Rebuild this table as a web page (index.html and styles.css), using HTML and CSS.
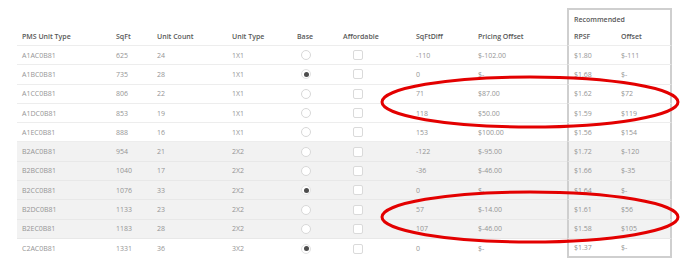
FILE: index.html
```html
<!DOCTYPE html>
<html>
<head>
<meta charset="utf-8">
<link rel="stylesheet" href="styles.css">
</head>
<body>
<div class="wrap">
<table class="grid">
  <colgroup>
    <col class="c1"><col class="c2"><col class="c3"><col class="c4"><col class="c5"><col class="c6"><col class="c7"><col class="c8"><col class="c9"><col class="c10">
  </colgroup>
  <thead>
    <tr class="group">
      <th colspan="8" class="blank"></th>
      <th colspan="2" class="rec-top">Recommended</th>
    </tr>
    <tr class="head">
      <th>PMS Unit Type</th><th>SqFt</th><th>Unit Count</th><th>Unit Type</th><th>Base</th><th>Affordable</th><th>SqFtDiff</th><th>Pricing Offset</th><th class="rl">RPSF</th><th class="rr">Offset</th>
    </tr>
  </thead>
  <tbody>
    <tr><td>A1AC0B81</td><td>625</td><td>24</td><td>1X1</td><td><span class="radio"></span></td><td><span class="check"></span></td><td>-110</td><td>$-102.00</td><td class="rl">$1.80</td><td class="rr">$-111</td></tr>
    <tr><td>A1BC0B81</td><td>735</td><td>28</td><td>1X1</td><td><span class="radio on"></span></td><td><span class="check"></span></td><td>0</td><td>$-</td><td class="rl">$1.68</td><td class="rr">$-</td></tr>
    <tr><td>A1CC0B81</td><td>806</td><td>22</td><td>1X1</td><td><span class="radio"></span></td><td><span class="check"></span></td><td>71</td><td>$87.00</td><td class="rl">$1.62</td><td class="rr">$72</td></tr>
    <tr><td>A1DC0B81</td><td>853</td><td>19</td><td>1X1</td><td><span class="radio"></span></td><td><span class="check"></span></td><td>118</td><td>$50.00</td><td class="rl">$1.59</td><td class="rr">$119</td></tr>
    <tr><td>A1EC0B81</td><td>888</td><td>16</td><td>1X1</td><td><span class="radio"></span></td><td><span class="check"></span></td><td>153</td><td>$100.00</td><td class="rl">$1.56</td><td class="rr">$154</td></tr>
    <tr class="alt"><td>B2AC0B81</td><td>954</td><td>21</td><td>2X2</td><td><span class="radio"></span></td><td><span class="check"></span></td><td>-122</td><td>$-95.00</td><td class="rl">$1.72</td><td class="rr">$-120</td></tr>
    <tr class="alt"><td>B2BC0B81</td><td>1040</td><td>17</td><td>2X2</td><td><span class="radio"></span></td><td><span class="check"></span></td><td>-36</td><td>$-46.00</td><td class="rl">$1.66</td><td class="rr">$-35</td></tr>
    <tr class="alt"><td>B2CC0B81</td><td>1076</td><td>33</td><td>2X2</td><td><span class="radio on"></span></td><td><span class="check"></span></td><td>0</td><td>$-</td><td class="rl">$1.64</td><td class="rr">$-</td></tr>
    <tr class="alt"><td>B2DC0B81</td><td>1133</td><td>23</td><td>2X2</td><td><span class="radio"></span></td><td><span class="check"></span></td><td>57</td><td>$-14.00</td><td class="rl">$1.61</td><td class="rr">$56</td></tr>
    <tr class="alt"><td>B2EC0B81</td><td>1183</td><td>28</td><td>2X2</td><td><span class="radio"></span></td><td><span class="check"></span></td><td>107</td><td>$-46.00</td><td class="rl">$1.58</td><td class="rr">$105</td></tr>
    <tr class="last"><td>C2AC0B81</td><td>1331</td><td>36</td><td>3X2</td><td><span class="radio on"></span></td><td><span class="check"></span></td><td>0</td><td>$-</td><td class="rl">$1.37</td><td class="rr">$-</td></tr>
  </tbody>
</table>
<svg class="marks" width="694" height="266" viewBox="0 0 694 266">
  <ellipse cx="530" cy="102" rx="148" ry="25" fill="none" stroke="#e30000" stroke-width="3"/>
  <ellipse cx="530" cy="217" rx="148" ry="25" fill="none" stroke="#e30000" stroke-width="3"/>
</svg>
</div>
</body>
</html>
```

FILE: styles.css
```css
html, body {
  margin: 0;
  padding: 0;
  background: #fff;
}
.wrap {
  position: relative;
  width: 694px;
  height: 266px;
  padding: 8px 0 0 17px;
  box-sizing: border-box;
  font-family: "Open Sans", "Liberation Sans", sans-serif;
  font-size: 7px;
}
.grid {
  border-collapse: separate;
  border-spacing: 0;
  table-layout: fixed;
  width: 655px;
}
.c1 { width: 94px; }
.c2 { width: 41px; }
.c3 { width: 75px; }
.c4 { width: 65px; }
.c5 { width: 46px; }
.c6 { width: 73px; }
.c7 { width: 62px; }
.c8 { width: 94px; }
.c9 { width: 49px; }
.c10 { width: 56px; }
th, td {
  padding: 0 0 0 5px;
  text-align: left;
  white-space: nowrap;
  box-sizing: border-box;
  vertical-align: middle;
}
th {
  font-weight: 600;
  color: #585858;
}
.group th {
  height: 20px;
}
.rec-top {
  border-top: 2px solid #cfcfcf;
  border-left: 2px solid #cfcfcf;
  border-right: 2px solid #cfcfcf;
  padding-left: 5px;
}
.head th {
  height: 18px;
  border-bottom: 1px solid #ededed;
}
td {
  height: 19.3px;
  color: #959595;
  border-bottom: 1px solid #ededed;
}
.rl {
  border-left: 2px solid #cfcfcf;
}
.rr {
  border-right: 2px solid #cfcfcf;
}
.last td {
  border-bottom: none;
}
.last .rl, .last .rr {
  border-bottom: 2px solid #cfcfcf;
}
.alt td {
  background: #f2f2f2;
  border-bottom-color: #e8e8e8;
}
.radio {
  display: block;
  width: 10px;
  height: 10px;
  border: 1px solid #d8d8d8;
  border-radius: 50%;
  background: #fff;
  box-sizing: border-box;
  margin-left: 4px;
  position: relative;
}
.radio.on {
  border-color: #e2e2e2;
}
.radio.on::after {
  content: "";
  position: absolute;
  left: 1.5px;
  top: 1.5px;
  width: 5px;
  height: 5px;
  border-radius: 50%;
  background: #4d4d4d;
}
.check {
  display: block;
  width: 10px;
  height: 10px;
  border: 1px solid #dadada;
  border-radius: 2px;
  background: #fff;
  box-sizing: border-box;
  margin-left: 10px;
}
.marks {
  position: absolute;
  left: 0;
  top: 0;
  pointer-events: none;
}
```
